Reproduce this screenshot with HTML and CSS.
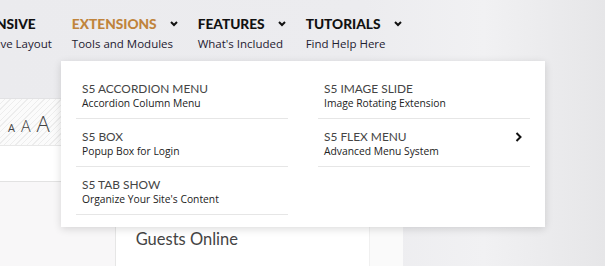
FILE: index.html
```html
<!DOCTYPE html>
<html lang="en">
<head>
    <meta charset="UTF-8">
    <meta name="viewport" content="width=device-width, initial-scale=1.0">
    <title>Extensions menu</title>
    <link rel="stylesheet" href="styles.css">
</head>
<body>
    <div class="page">
        <header class="header">
            <nav class="nav">
                <div class="nav-item first">
                    <div class="nav-title">RESPONSIVE</div>
                    <div class="nav-sub">Responsive Layout</div>
                </div>
                <div class="nav-item active">
                    <div class="nav-title">EXTENSIONS <svg class="chev" width="8" height="6" viewBox="0 0 8 6"><path d="M1 1l3 3 3-3" fill="none" stroke="#111" stroke-width="2"/></svg></div>
                    <div class="nav-sub">Tools and Modules</div>
                </div>
                <div class="nav-item">
                    <div class="nav-title">FEATURES <svg class="chev" width="8" height="6" viewBox="0 0 8 6"><path d="M1 1l3 3 3-3" fill="none" stroke="#111" stroke-width="2"/></svg></div>
                    <div class="nav-sub">What's Included</div>
                </div>
                <div class="nav-item">
                    <div class="nav-title">TUTORIALS <svg class="chev" width="8" height="6" viewBox="0 0 8 6"><path d="M1 1l3 3 3-3" fill="none" stroke="#111" stroke-width="2"/></svg></div>
                    <div class="nav-sub">Find Help Here</div>
                </div>
            </nav>
        </header>

        <div class="toolbar">
            <div class="font-resizer">
                <span class="fs-small">A</span>
                <span class="fs-medium">A</span>
                <span class="fs-large">A</span>
            </div>
        </div>
        <div class="breadcrumb-bar"></div>

        <div class="content">
            <div class="side-left"></div>
            <div class="main">
                <h3 class="module-title">Guests Online</h3>
            </div>
            <div class="side-right"></div>
        </div>

        <div class="dropdown">
            <div class="drop-col">
                <div class="drop-item">
                    <div class="drop-title">S5 ACCORDION MENU</div>
                    <div class="drop-sub">Accordion Column Menu</div>
                </div>
                <div class="drop-item">
                    <div class="drop-title">S5 BOX</div>
                    <div class="drop-sub">Popup Box for Login</div>
                </div>
                <div class="drop-item">
                    <div class="drop-title">S5 TAB SHOW</div>
                    <div class="drop-sub">Organize Your Site's Content</div>
                </div>
            </div>
            <div class="drop-col">
                <div class="drop-item">
                    <div class="drop-title">S5 IMAGE SLIDE</div>
                    <div class="drop-sub">Image Rotating Extension</div>
                </div>
                <div class="drop-item has-child">
                    <div class="drop-title">S5 FLEX MENU</div>
                    <div class="drop-sub">Advanced Menu System</div>
                    <svg class="arrow" width="7" height="10" viewBox="0 0 7 10"><path d="M1.5 1l4 4-4 4" fill="none" stroke="#111" stroke-width="2"/></svg>
                </div>
            </div>
        </div>
    </div>
</body>
</html>
```

FILE: styles.css
```css
body { margin: 0; width: 605px; height: 266px; overflow: hidden; font-family: 'Open Sans', sans-serif; background: linear-gradient(to right, #ebebee 0%, #ececef 60%, #f1f1f3 80%, #e6e6e8 100%); }
.page { position: relative; width: 605px; height: 266px; }

.header { height: 98px; box-sizing: border-box; padding-top: 15px; }
.nav { display: flex; gap: 20px; margin-left: -48px; }
.nav-item { display: flex; flex-direction: column; }
.nav-title { font-family: 'Lato', sans-serif; font-weight: 900; font-size: 13.7px; line-height: 18px; color: #111; white-space: nowrap; display: flex; align-items: center; gap: 13px; }
.nav-item.active .nav-title { color: #c0843c; }
.chev { display: block; }
.nav-sub { font-size: 11.5px; color: #1e2030; margin-top: 3px; white-space: nowrap; }

.toolbar { width: 403px; height: 47px; box-sizing: border-box; border-top: 1px solid #e2e2e4; background: repeating-linear-gradient(135deg, #fbfbfb 0 3px, #ededed 3px 4px); display: flex; align-items: flex-end; padding: 0 0 11px 8px; }
.font-resizer { display: flex; align-items: baseline; gap: 6px; color: #444; font-family: 'Open Sans', sans-serif; font-weight: 300; line-height: 1; }
.fs-small { font-size: 11px; font-weight: 400; }
.fs-medium { font-size: 16px; }
.fs-large { font-size: 22px; }

.breadcrumb-bar { width: 403px; height: 37px; box-sizing: border-box; background: #fff; border-top: 1px solid #e8e8e8; border-bottom: 1px solid #e2e2e2; }

.content { display: flex; width: 403px; height: 84px; }
.side-left { width: 115px; background: #f8f7f8; border-right: 1px solid #e6e6e6; }
.main { width: 254px; background: #fff; padding: 0 20px; box-sizing: border-box; }
.side-right { width: 33px; background: #fafafa; border-left: 1px solid #f0f0f0; }
.module-title { margin: 47px 0 0; font-family: 'Lato', sans-serif; font-weight: 400; font-size: 16.5px; color: #444; }

.dropdown { position: absolute; left: 61px; top: 61px; width: 484px; height: 166px; box-sizing: border-box; padding: 10px 15px; background: #fff; box-shadow: 0 2px 8px rgba(0,0,0,0.14); display: grid; grid-template-columns: 212px 212px; column-gap: 30px; align-content: start; }
.drop-item { position: relative; height: 48px; box-sizing: border-box; padding: 10px 6px 0; border-bottom: 1px solid #e6e6e6; }
.drop-title { font-family: 'Lato', sans-serif; font-size: 11.9px; color: #444; line-height: 15px; }
.drop-sub { font-size: 10.3px; color: #222; line-height: 14px; }
.arrow { position: absolute; right: 8px; top: 13px; }
```
